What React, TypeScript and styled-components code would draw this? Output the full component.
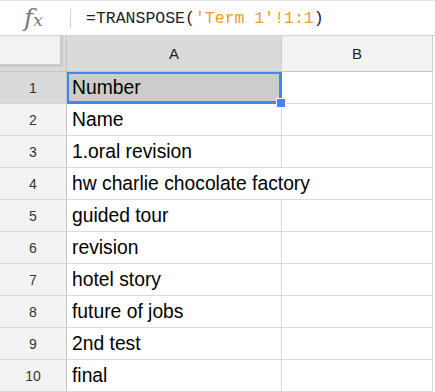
import styled, { createGlobalStyle } from "styled-components";

const Global = createGlobalStyle`
  html, body {
    margin: 0;
    padding: 0;
    background: #ffffff;
  }
`

const Page = styled.div`
  width: 435px;
  height: 392px;
  overflow: hidden;
  background: #ffffff;
  font-family: 'Liberation Sans', Arial, sans-serif;
`

// formula bar
const FormulaBar = styled.div`
  display: flex;
  align-items: center;
  height: 34px;
  border-top: 1px solid #e3e3e3;
  border-bottom: 1px solid #d4d4d4;
  box-sizing: content-box;
`

const FxIcon = styled.div`
  width: 67px;
  display: flex;
  justify-content: center;
  align-items: baseline;
  color: #7a7a7a;
  font-family: 'DejaVu Serif', 'Liberation Serif', serif;
  padding-right: 3px;
  margin-top: -2px;

  & > i {
    font-size: 25px;
    font-style: italic;
  }

  & > span {
    font-size: 17px;
    font-style: italic;
    margin-left: 0px;
  }
`

const Divider = styled.div`
  width: 1px;
  height: 19px;
  background: #d2d2d2;
  margin-right: 15px;
`

const Formula = styled.div`
  font-family: 'Liberation Mono', 'DejaVu Sans Mono', monospace;
  font-size: 16.5px;
  color: #222222;
  white-space: pre;
  padding-top: 1px;
`

const RangeRef = styled.span`
  color: #f09a2c;
`

// grid
const Grid = styled.div`
  display: grid;
  grid-template-columns: 67px 215px 151px;
  grid-auto-rows: 32px;
  grid-template-rows: 36px;
`

const Corner = styled.div`
  background: #dadada;
  border-right: 1px solid #c4c4c4;
  border-bottom: 1px solid #c4c4c4;
  display: flex;
`

const CornerInner = styled.div`
  width: 60px;
  height: 28px;
  background: #f2f2f2;
  border-right: 3px solid #c9c9c9;
  border-bottom: 3px solid #c9c9c9;
`

const ColHeader = styled.div<{ $active?: boolean }>`
  background: ${p => (p.$active ? '#dadada' : '#f3f3f3')};
  border-right: 1px solid #cfcfcf;
  border-bottom: 1px solid #c4c4c4;
  display: flex;
  align-items: center;
  justify-content: center;
  font-size: 15px;
  color: #222222;
`

const RowHeader = styled.div<{ $active?: boolean }>`
  background: ${p => (p.$active ? '#dadada' : '#f3f3f3')};
  border-right: 1px solid #c4c4c4;
  border-bottom: 1px solid #d6d6d6;
  display: flex;
  align-items: center;
  justify-content: center;
  font-size: 14px;
  color: #333333;
`

const Cell = styled.div<{ $spill?: boolean }>`
  position: relative;
  border-right: 1px solid ${p => (p.$spill ? 'transparent' : '#dadada')};
  border-bottom: 1px solid #dadada;
  display: flex;
  align-items: center;
  padding-left: 5px;
  font-size: 19.3px;
  color: #000000;
  white-space: nowrap;
  overflow: visible;
  z-index: 1;
`

const EmptyCell = styled.div`
  border-right: 1px solid #dadada;
  border-bottom: 1px solid #dadada;
`

const SelectedCell = styled(Cell)`
  background: #cccccc;
  box-shadow: inset 2px 2px 0 #4285f4, inset -2px -2px 0 #4285f4;
  border-right-color: #4285f4;
  border-bottom-color: #4285f4;
  z-index: 2;
`

const FillHandle = styled.div`
  position: absolute;
  right: -5px;
  bottom: -5px;
  width: 8px;
  height: 8px;
  background: #4285f4;
  border: 1px solid #ffffff;
`

const rows = [
  'Number',
  'Name',
  '1.oral revision',
  'hw charlie chocolate factory',
  'guided tour',
  'revision',
  'hotel story',
  'future of jobs',
  '2nd test',
  'final',
]

export default function App() {
  return (
    <Page>
      <Global />
      <FormulaBar>
        <FxIcon><i>f</i><span>x</span></FxIcon>
        <Divider />
        <Formula>=TRANSPOSE(<RangeRef>'Term 1'!1:1</RangeRef>)</Formula>
      </FormulaBar>
      <Grid>
        <Corner><CornerInner /></Corner>
        <ColHeader $active>A</ColHeader>
        <ColHeader>B</ColHeader>
        {rows.map((text, i) => {
          const first = i === 0
          const spill = text.length > 24
          return [
            <RowHeader key={`h${i}`} $active={first}>{i + 1}</RowHeader>,
            first ? (
              <SelectedCell key={`a${i}`}>
                {text}
                <FillHandle />
              </SelectedCell>
            ) : (
              <Cell key={`a${i}`} $spill={spill}>{text}</Cell>
            ),
            <EmptyCell key={`b${i}`} />,
          ]
        })}
      </Grid>
    </Page>
  )
}
